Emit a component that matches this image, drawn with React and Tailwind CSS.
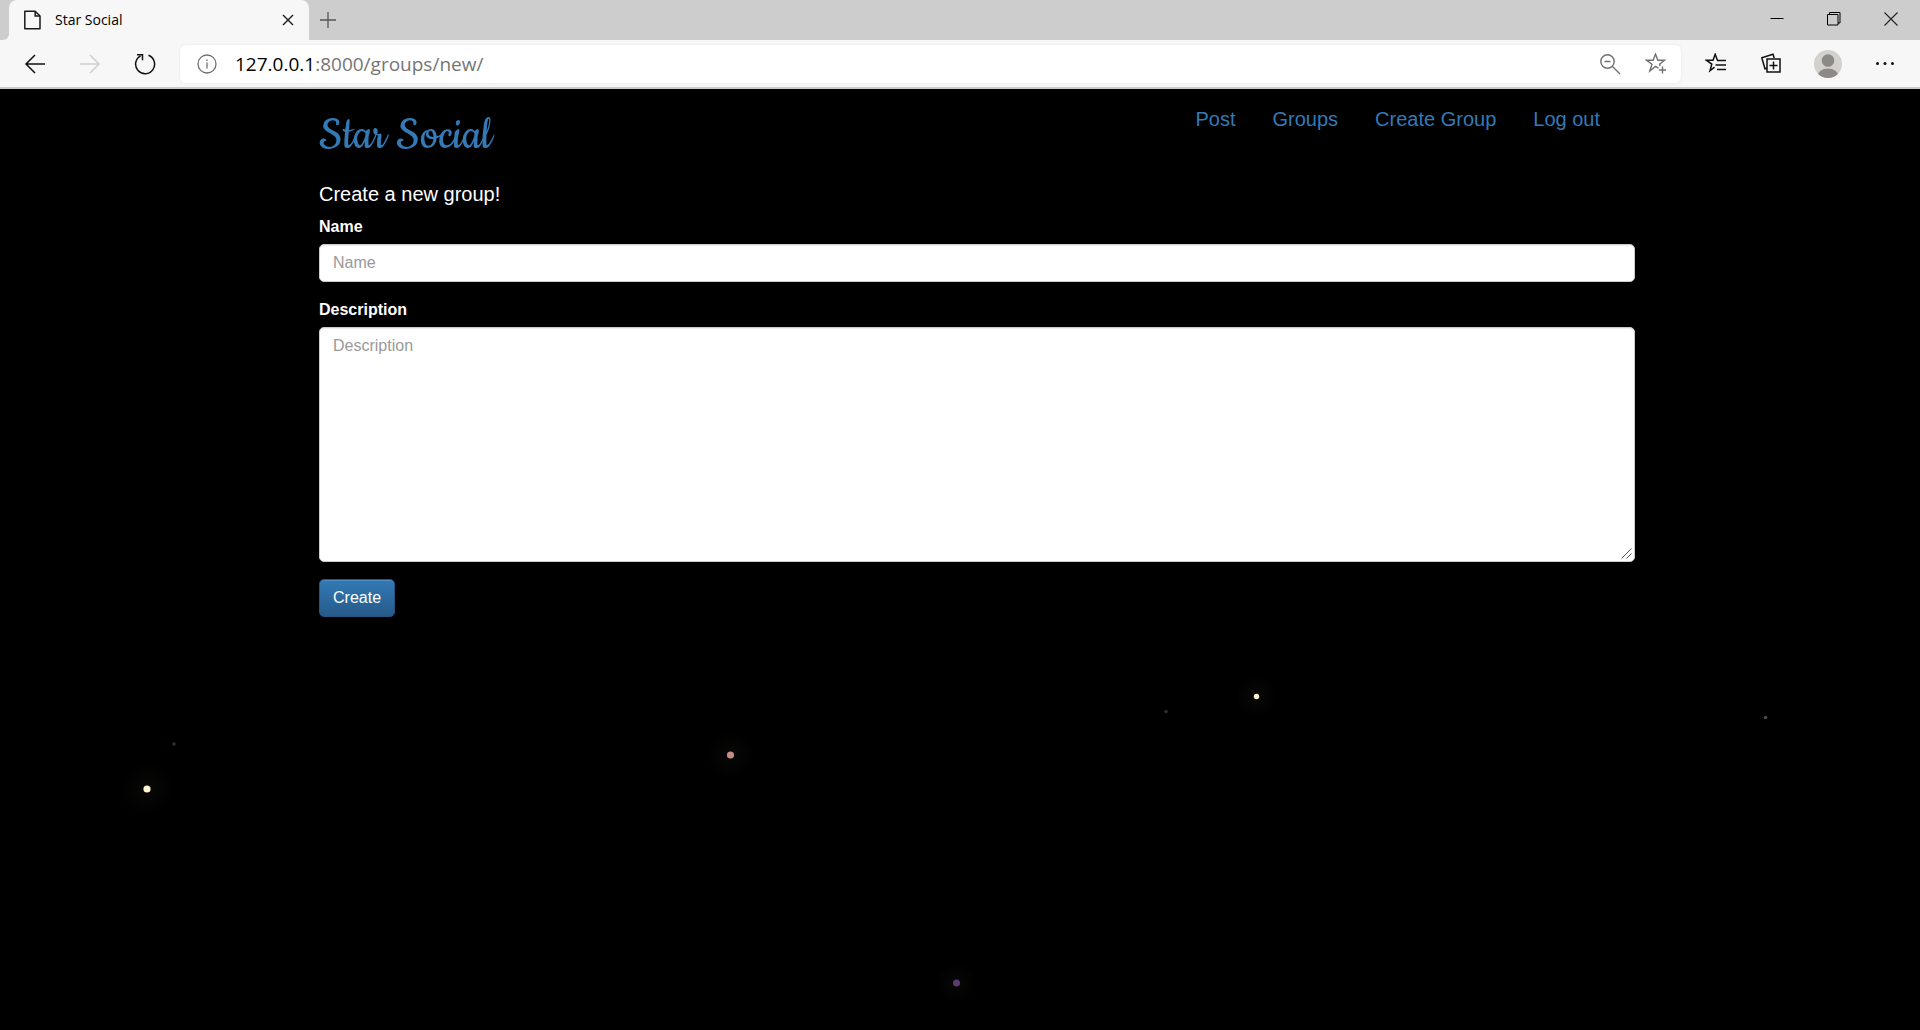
import React from "react";

const stars = [
  { x: 147, y: 700, r: 3.6, color: "#fff4d2", halo: 28 },
  { x: 174, y: 655, r: 1.8, color: "#3a2a30", halo: 0 },
  { x: 730.5, y: 666, r: 3.6, color: "#c58b87", halo: 24 },
  { x: 1166, y: 622.5, r: 1.8, color: "#332a2e", halo: 0 },
  { x: 1256.5, y: 607.5, r: 2.7, color: "#fff4d2", halo: 22 },
  { x: 1765.5, y: 628.5, r: 1.8, color: "#4a4744", halo: 0 },
  { x: 956.5, y: 894, r: 3.5, color: "#5b3a70", halo: 20 },
];

function Icon({ size = 20, color = "#111", width = 1.3, children }) {
  return (
    <svg
      width={size}
      height={size}
      viewBox={`0 0 ${size} ${size}`}
      fill="none"
      stroke={color}
      strokeWidth={width}
      className="shrink-0"
      aria-hidden="true"
    >
      {children}
    </svg>
  );
}

function TabStrip() {
  return (
    <div className="flex h-10 items-stretch bg-[#cdcdcd]">
      <div className="w-[9px] rounded-br-md bg-[#cdcdcd] shadow-[0_8px_0_0_#f7f7f7]" />
      <div className="flex w-[300px] items-center rounded-t-lg bg-[#f7f7f7] px-3.5">
        <Icon size={20} color="#1a1a1a" width={1.5}>
          <path d="M1.8 1.2h10.4l4.8 4.8v12.8H1.8z" strokeLinejoin="round" />
          <path d="M12.2 1.2v4.8h4.8" />
        </Icon>
        <span className="ml-3 grow font-['Open_Sans',sans-serif] text-sm leading-5 text-black">Star Social</span>
        <button type="button" aria-label="Close tab">
          <Icon size={14} color="#1a1a1a" width={1.4}>
            <path d="M2 2l10 10M12 2L2 12" />
          </Icon>
        </button>
      </div>
      <button type="button" aria-label="New tab" className="ml-2 px-0.5">
        <Icon size={18} color="#555" width={1.3}>
          <path d="M9 1v16M1 9h16" />
        </Icon>
      </button>
      <div className="ml-auto flex items-center gap-[43px] pr-[22px] pb-[3px]">
        <button type="button" aria-label="Minimize">
          <Icon size={14} color="#000" width={1}>
            <path d="M0.5 6.5h13" />
          </Icon>
        </button>
        <button type="button" aria-label="Restore">
          <Icon size={14} color="#000" width={1}>
            <path d="M0.5 2.5h10.5v10.5H0.5zM2.5 2.5v-2h10.5v10.5h-2" />
          </Icon>
        </button>
        <button type="button" aria-label="Close">
          <Icon size={14} color="#222" width={1.1}>
            <path d="M0.5 0.5l13 13M13.5 0.5l-13 13" />
          </Icon>
        </button>
      </div>
    </div>
  );
}

function Toolbar() {
  return (
    <div className="flex h-[49px] items-center border-b-2 border-[#cbcbcb] bg-[#f7f7f7]">
      <div className="flex items-center gap-[33px] pl-6">
        <button type="button" aria-label="Back">
          <Icon size={22} width={1.5}>
            <path d="M21 11H2M11 2L2 11l9 9" />
          </Icon>
        </button>
        <button type="button" aria-label="Forward">
          <Icon size={22} color="#cfcfcf" width={1.5}>
            <path d="M1 11h19M11 2l9 9-9 9" />
          </Icon>
        </button>
        <button type="button" aria-label="Refresh">
          <Icon size={22} width={1.5}>
            <path d="M14.5 2.3A9.5 9.5 0 1 1 6.6 2.8" />
            <path d="M3 1.7h5.5v5.6" />
          </Icon>
        </button>
      </div>
      <div className="ml-6 flex h-[38px] grow items-center rounded-md bg-white pl-[17px] pr-3.5 shadow-[0_0_3px_rgba(0,0,0,0.07)]">
        <Icon size={20} color="#707070" width={1.3}>
          <circle cx="10" cy="10" r="9" />
          <path d="M10 8.5v6" />
          <path d="M10 5.5v1.5" />
        </Icon>
        <div className="ml-[18px] grow font-['Open_Sans',sans-serif] text-[19px] leading-7 text-[#757575]">
          <span className="text-black">127.0.0.1</span>:8000/groups/new/
        </div>
        <button type="button" aria-label="Zoom">
          <Icon size={22} color="#707070" width={1.4}>
            <circle cx="8.5" cy="8.5" r="6.7" />
            <path d="M5.5 8.5h6M13.5 13.5l7.5 7.5" />
          </Icon>
        </button>
        <button type="button" aria-label="Add to favorites" className="ml-6">
          <Icon size={22} color="#707070" width={1.4}>
            <path d="M13.5 15.2L10.5 13.4 4.8 18l2.2-6.8-5.5-4h6.7L10.5 1l2.3 6.2h6.7l-5 4 .6 1.8" />
            <path d="M17.5 13.5v7M14 17h7" />
          </Icon>
        </button>
      </div>
      <div className="flex items-center pl-6 pr-[25px]">
        <button type="button" aria-label="Favorites">
          <Icon size={22} width={1.5}>
            <path d="M9.5 14.2L5 17.8l1.8-6.7-5.5-3.9H8L10.2 1.2l2.2 6" />
            <path d="M12 7.5h9M10.5 12h10.5M12 16.5h9" />
          </Icon>
        </button>
        <button type="button" aria-label="Collections" className="ml-[34px]">
          <Icon size={22} width={1.5}>
            <path d="M6 15.3L4 15.8 0.8 4.7 12 1.2l1.2 3.8" />
            <path d="M6 6h13v13H6zM12.5 8.5v8M8.5 12.5h8" />
          </Icon>
        </button>
        <button type="button" aria-label="Profile" className="ml-[31px]">
          <svg width="28" height="28" viewBox="0 0 28 28" aria-hidden="true">
            <clipPath id="avatar">
              <circle cx="14" cy="14" r="14" />
            </clipPath>
            <g clipPath="url(#avatar)">
              <rect width="28" height="28" fill="#d3d1ce" />
              <circle cx="14" cy="10.5" r="6.3" fill="#8d8986" />
              <ellipse cx="14" cy="26" rx="10.5" ry="7.5" fill="#8d8986" />
            </g>
          </svg>
        </button>
        <button type="button" aria-label="Settings and more" className="ml-[33px]">
          <svg width="20" height="20" viewBox="0 0 20 20" fill="#111" aria-hidden="true">
            <circle cx="2.5" cy="9.5" r="1.5" />
            <circle cx="10" cy="9.5" r="1.5" />
            <circle cx="17.5" cy="9.5" r="1.5" />
          </svg>
        </button>
      </div>
    </div>
  );
}

function StarField() {
  return (
    <svg className="absolute inset-0 h-full w-full" aria-hidden="true">
      <radialGradient id="glow">
        <stop offset="0" stopColor="#fff4d2" stopOpacity="0.03" />
        <stop offset="1" stopColor="#fff4d2" stopOpacity="0" />
      </radialGradient>
      {stars.map((s) => (
        <g key={`${s.x}-${s.y}`}>
          {s.halo > 0 && <circle cx={s.x} cy={s.y} r={s.halo} fill="url(#glow)" />}
          <circle cx={s.x} cy={s.y} r={s.r} fill={s.color} />
        </g>
      ))}
    </svg>
  );
}

const links = ["Post", "Groups", "Create Group", "Log out"];
const field =
  "block w-full rounded-[5px] border border-[#cccccc] bg-white px-[13px] py-[7px] text-base leading-[22px] text-[#555555] shadow-[inset_0_1px_1px_rgba(0,0,0,0.075)] outline-none placeholder:text-[#999999]";
const label = "mb-1.5 block text-base font-bold leading-[22px]";

export default function App() {
  return (
    <div className="flex min-h-screen flex-col bg-black">
      <TabStrip />
      <Toolbar />
      <main className="relative grow overflow-hidden font-['Liberation_Sans',Arial,sans-serif] text-white">
        <StarField />
        <div className="relative mx-auto max-w-[1350px] pl-[34px]">
          <header className="flex h-[91px] items-start justify-between">
            <a
              href="#home"
              className="mt-[22px] font-['Cookie','Lato',cursive] text-[51px] leading-[50px] text-[#337ab7]"
            >
              Star Social
            </a>
            <nav className="mt-4 flex gap-[37px] pr-[35px] text-[20px] leading-7 text-[#337ab7]">
              {links.map((text) => (
                <a key={text} href="#nav">
                  {text}
                </a>
              ))}
            </nav>
          </header>
          <h1 className="mb-2 text-[20px] leading-7">Create a new group!</h1>
          <form onSubmit={(e) => e.preventDefault()}>
            <div className="mb-[17px]">
              <label htmlFor="name" className={label}>
                Name
              </label>
              <input id="name" type="text" placeholder="Name" className={`${field} h-[38px]`} />
            </div>
            <div className="mb-[17px]">
              <label htmlFor="description" className={label}>
                Description
              </label>
              <div className="relative">
                <textarea id="description" placeholder="Description" className={`${field} h-[235px] resize-none`} />
                <svg
                  width="11"
                  height="11"
                  viewBox="0 0 11 11"
                  stroke="#555"
                  className="absolute right-[3px] bottom-[3px]"
                  aria-hidden="true"
                >
                  <path d="M0.5 10.5l10-10M5.5 10.5l5-5" />
                </svg>
              </div>
            </div>
            <button
              type="submit"
              className="block h-[38px] rounded-[5px] border border-[#245580] bg-linear-to-b from-[#337ab7] to-[#265a88] px-[13px] text-base leading-[22px] text-white shadow-[inset_0_1px_0_rgba(255,255,255,0.15)]"
            >
              Create
            </button>
          </form>
        </div>
      </main>
    </div>
  );
}
